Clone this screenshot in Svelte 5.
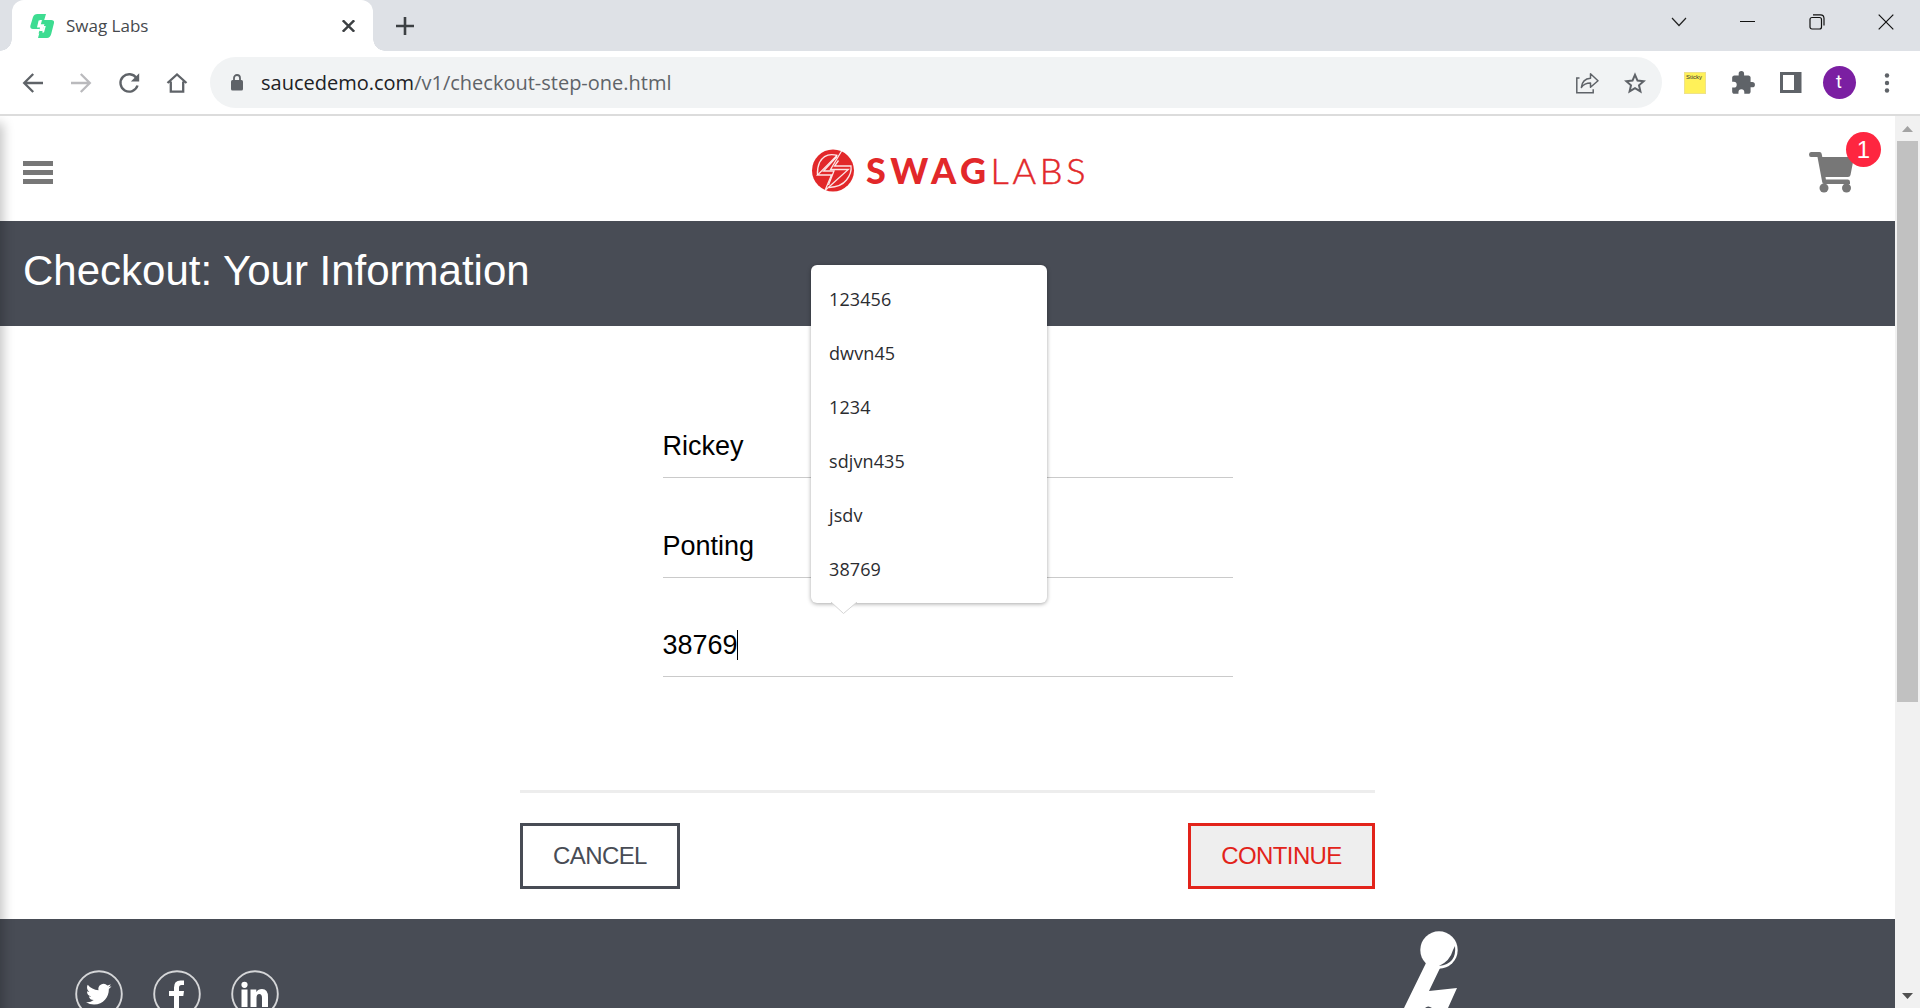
<script>
  const suggestions = ['123456', 'dwvn45', '1234', 'sdjvn435', 'jsdv', '38769'];
  const fields = [
    { value: 'Rickey', active: false },
    { value: 'Ponting', active: false },
    { value: '38769', active: true }
  ];
</script>

<div class="window">
  <div class="tabstrip">
    <div class="tab">
      <svg class="favicon" width="24" height="24" viewBox="0 0 24 24">
        <path fill="#3ddc91" d="M7.5 0H16L14.2 6H9.8L8 13h5.5L12 19.500H8.500L10 15H3Q0 15 .3 12L3 3Q4 0 7.500 0z" />
        <path fill="#3ddc91" d="M12 6h9.500Q24.500 6 24 9l-2.800 11Q20 24 17 24H8l1.500-5.500H14L15.800 12H10z" />
        <path fill="#fff" d="M8.600 6.500h4l-.8 3.500h2.600l-1.600 7H9.200l.9-3.500H7z" />
        <path fill="#3ddc91" d="M12 6.300h3l-1 4h-3.200z" />
      </svg>
      <span class="tab-title">Swag Labs</span>
      <svg class="tab-close" width="13" height="12" viewBox="0 0 13 12"><path d="M.8.300l11.400 11.400M12.200.300L.8 11.700" fill="none" stroke="#3c4043" stroke-width="2.400" /></svg>
    </div>
    <svg class="new-tab" width="18" height="18" viewBox="0 0 18 18"><path d="M9 0v18M0 9h18" stroke="#3c4043" stroke-width="2.600" /></svg>
    <div class="window-controls">
      <span><svg width="16" height="10" viewBox="0 0 16 10"><path d="M1 1l7 7.500L15 1" fill="none" stroke="#222" stroke-width="1.200" /></svg></span>
      <span><svg width="15" height="2" viewBox="0 0 15 2"><path d="M0 .5h15" stroke="#111" stroke-width="1" /></svg></span>
      <span><svg width="16" height="16" viewBox="0 0 16 16"><g fill="none" stroke="#111" stroke-width="1.200"><rect x="1" y="3.500" width="11.500" height="11.500" rx="2" /><path d="M4 .8h7.500Q15 .8 15 4.500v7" /></g></svg></span>
      <span><svg width="16" height="16" viewBox="0 0 16 16"><path d="M.7.700l14.600 14.600M15.300.700L.7 15.300" stroke="#111" stroke-width="1.200" /></svg></span>
    </div>
  </div>

  <div class="toolbar">
    <span class="cell"><svg width="22" height="22" viewBox="0 0 22 22"><path d="M21 11H2.500M11.200 2L2.200 11l9 9" fill="none" stroke="#5f6368" stroke-width="2.300" /></svg></span>
    <span class="cell"><svg width="22" height="22" viewBox="0 0 22 22"><path d="M1 11h18.500M10.800 2l9 9-9 9" fill="none" stroke="#bababd" stroke-width="2.300" /></svg></span>
    <span class="cell"><svg width="22" height="22" viewBox="0 0 22 22"><path d="M18.500 6.200A8.700 8.700 0 1 0 19.500 13.500" fill="none" stroke="#5f6368" stroke-width="2.400" /><path d="M21.200 1.200v8.300h-8.300z" fill="#5f6368" /></svg></span>
    <span class="cell"><svg width="22" height="22" viewBox="0 0 22 22"><path d="M1.500 11L11 2.500 20.500 11M4.800 9.500V19.700h12.400V9.500" fill="none" stroke="#5f6368" stroke-width="2.300" /></svg></span>
    <div class="omnibox">
      <svg class="lock" width="12" height="17" viewBox="0 0 12 17"><rect y="6" width="12" height="10.500" rx="1.500" fill="#5f6368" /><path d="M3 7V4a3 3 0 0 1 6 0v3" fill="none" stroke="#5f6368" stroke-width="1.800" /></svg>
      <span class="url">saucedemo.com<i>/v1/checkout-step-one.html</i></span>
      <span class="cell"><svg width="24" height="22" viewBox="0 0 24 22"><g fill="none" stroke="#5f6368" stroke-width="1.500"><path d="M4.500 6H1.800v14.800h16.400v-3.600" /><path stroke-linejoin="round" d="M6.300 15.500C7 9.500 10.500 6.500 15.500 6.200V1.800L23 8.700l-7.500 6.600v-4.200c-4 0-7 1.200-9.200 4.400z" /></g></svg></span>
      <span class="cell"><svg width="22" height="22" viewBox="0 0 22 22"><path d="M11 2.800l2.500 5.800 6.200.6-4.700 4.100 1.400 6.100-5.400-3.200-5.400 3.200L7 13.300 2.300 9.200l6.200-.6z" fill="none" stroke="#5f6368" stroke-width="2" /></svg></span>
    </div>
    <span class="cell"><span class="sticky">Sticky</span></span>
    <span class="cell"><svg width="26" height="26" viewBox="0 0 24 24"><path fill="#5f6368" d="M20.500 11H19V7c0-1.100-.9-2-2-2h-4V3.500a2.500 2.500 0 0 0-5 0V5H4c-1.100 0-2 .9-2 2v3.800h1.500a2.700 2.700 0 0 1 0 5.400H2V20c0 1.100.9 2 2 2h3.800v-1.500a2.700 2.700 0 0 1 5.400 0V22H17c1.100 0 2-.9 2-2v-4h1.500a2.500 2.500 0 0 0 0-5z" /></svg></span>
    <span class="cell"><svg width="22" height="21" viewBox="0 0 22 21"><path fill="#5f6368" fill-rule="evenodd" d="M0 0h21.500v21H0zM3 3v15h11V3z" /></svg></span>
    <span class="cell"><span class="avatar">t</span></span>
    <span class="cell"><svg width="6" height="20" viewBox="0 0 6 20"><g fill="#5f6368"><circle cx="3" cy="2.500" r="2.200" /><circle cx="3" cy="10" r="2.200" /><circle cx="3" cy="17.500" r="2.200" /></g></svg></span>
  </div>

  <div class="viewport">
    <main>
      <header>
        <div class="burger"><b></b><b></b><b></b></div>
        <svg class="logo" width="276" height="48" viewBox="0 0 276 48">
          <circle cx="22" cy="24.500" r="21" fill="#e2282a" />
          <g fill="none" stroke="#fff" stroke-opacity=".88" stroke-width="1.300">
            <path d="M31.500 3.500L19.500 23.500h17.800L14 44.500l6.500-15.500H6.500L26 9.500" />
            <path d="M26.500 9.500Q14 6 8.500 16.500 6 22 6.500 29M26 10.500L12.500 25H23L17.500 39" />
            <path d="M27.500 14.500L23.500 20H40Q41 27 35.500 34T18 41.500" />
          </g>
          <text class="swag" x="55" y="37.500" textLength="120" lengthAdjust="spacing">SWAG</text>
          <text class="labs" x="179.500" y="37.500" textLength="95" lengthAdjust="spacing">LABS</text>
        </svg>
        <div class="cart">
          <svg width="46" height="42" viewBox="0 0 46 42">
            <path fill="#777" d="M2 0h8.500q2 0 2.200 2l.6 3H45l-3.500 18q-.4 2-2.500 2H16.500l.4 2.500H39q2 0 2 2.500v2H15q-1.500 0-1.800-2L8.500 5H2Q0 5 0 2.500T2 0z" />
            <circle cx="15" cy="36" r="4.500" fill="#777" /><circle cx="37.500" cy="36" r="4.500" fill="#777" />
          </svg>
          <span class="badge">1</span>
        </div>
      </header>
      <div class="subheader">Checkout: Your Information</div>

      <form>
        <div class="fields">
          {#each fields as field}
            <div class="field"><span class:active={field.active}>{field.value}</span></div>
          {/each}
        </div>
        <div class="actions">
          <span class="btn cancel">CANCEL</span>
          <span class="btn continue">CONTINUE</span>
        </div>
      </form>

      <footer>
        <div class="social">
          <svg width="48" height="48" viewBox="0 0 48 48">
            <circle cx="24" cy="24" r="22.800" fill="none" stroke="#d5d6d8" stroke-width="1.900" />
            <path fill="#fff" transform="translate(11 11.500) scale(1.060)" d="M23.950 4.570a10 10 0 0 1-2.820.77 4.960 4.960 0 0 0 2.160-2.720c-.95.55-2 .95-3.130 1.180a4.920 4.920 0 0 0-8.380 4.480C7.690 8.090 4.070 6.130 1.640 3.160a4.820 4.820 0 0 0-.67 2.480c0 1.710.87 3.210 2.190 4.100a4.900 4.900 0 0 1-2.230-.62v.06a4.920 4.920 0 0 0 3.950 4.830 5 5 0 0 1-2.210.08 4.940 4.940 0 0 0 4.600 3.420A9.870 9.870 0 0 1 0 19.540a14 14 0 0 0 7.550 2.210c9.050 0 14-7.500 14-13.980 0-.21 0-.42-.02-.63a9.940 9.940 0 0 0 2.460-2.550z" />
          </svg>
          <svg width="48" height="48" viewBox="0 0 48 48">
            <circle cx="24" cy="24" r="22.800" fill="none" stroke="#d5d6d8" stroke-width="1.900" />
            <path fill="#fff" d="M21 38V26h-5v-5h5v-3.500q0-7 6.500-7H31V15h-2.500q-2.500 0-2.500 2.500V21h5l-.7 5H26v12z" />
          </svg>
          <svg width="48" height="48" viewBox="0 0 48 48">
            <circle cx="24" cy="24" r="22.800" fill="none" stroke="#d5d6d8" stroke-width="1.900" />
            <path fill="#fff" d="M10.500 19.500h6V37h-6zM19.500 19.500h5.800V22q1.800-3 5.700-3 6 0 6 8v10h-6v-9q0-4-2.700-4-2.800 0-2.800 4v9h-6z" /><circle cx="13.500" cy="14.800" r="3.100" fill="#fff" />
          </svg>
        </div>
        <svg class="robot" width="60" height="77" viewBox="0 0 60 77">
          <circle cx="35" cy="19" r="18.700" fill="#fff" />
          <path fill="#fff" d="M22 32L0 77h44l9-20-28 3 12-25z" />
          <path d="M51 15q2 18-16 20 11-5 14-16z" fill="#484c55" />
          <path d="M21 77q3-3 7 0z" fill="#484c55" />
        </svg>
      </footer>

      <div class="popup">
        {#each suggestions as item}<div>{item}</div>{/each}
        <svg class="pointer" width="26" height="12" viewBox="0 0 26 12"><path d="M0 0l12.500 11.500L26 0" fill="#fff" stroke="#d4d4d4" /></svg>
      </div>
      <div class="edge-shadow"></div>
    </main>
    <div class="scrollbar">
      <svg width="11" height="6" viewBox="0 0 11 6"><path d="M0 6l5.500-6L11 6z" fill="#a3a3a3" /></svg>
      <div class="thumb"></div>
      <svg class="down" width="11" height="6" viewBox="0 0 11 6"><path d="M0 0l5.500 6L11 0z" fill="#505050" /></svg>
    </div>
  </div>
</div>

<style>
  :global(body) { margin: 0; overflow: hidden; }
  .window { width: 1920px; height: 1008px; display: flex; flex-direction: column; background: #fff; overflow: hidden; font-family: "Liberation Sans", Arial, sans-serif; }
  svg { display: block; flex: none; }

  .tabstrip { height: 51px; flex: none; display: flex; align-items: center; background: #dee1e6; }
  .tab { position: relative; box-sizing: border-box; width: 361px; height: 51px; margin-left: 12px; padding: 0 18.500px 0 18px; display: flex; align-items: center; background: #fff; border-radius: 12px 12px 0 0; }
  .tab::before, .tab::after { content: ""; position: absolute; bottom: 0; width: 12px; height: 12px; }
  .tab::before { left: -12px; background: radial-gradient(circle at 0 0, transparent 11.500px, #fff 12px); }
  .tab::after { right: -12px; background: radial-gradient(circle at 100% 0, transparent 11.500px, #fff 12px); }
  .tab-title { margin-left: 12px; font: 17px "Open Sans", sans-serif; color: #45494d; }
  .tab-close { margin-left: auto; }
  .new-tab { margin-left: 23px; }
  .window-controls { margin: 0 0 8px auto; display: flex; }
  .window-controls span { width: 69px; display: grid; place-items: center; }

  .toolbar { height: 63px; flex: none; display: flex; align-items: center; padding: 0 9px; border-bottom: 2px solid #dcdcdc; }
  .cell { width: 48px; flex: none; display: grid; place-items: center; }
  .omnibox { flex: 1; height: 51px; margin: 0 9px; padding: 0 3px 0 21px; box-sizing: border-box; display: flex; align-items: center; border-radius: 26px; background: #f1f3f4; }
  .url { flex: 1; margin-left: 18px; font: 20px "Open Sans", sans-serif; color: #202124; white-space: nowrap; }
  .url i { font-style: normal; color: #5f6368; }
  .sticky { width: 22px; height: 22px; box-sizing: border-box; padding-left: 1px; background: #fff159; border: 1px solid #eee28a; font: 6px/8px "Liberation Sans", sans-serif; color: #333; }
  .avatar { width: 33px; height: 33px; border-radius: 50%; background: #7b1fa2; color: #fff; font: 18px/32px Roboto, sans-serif; text-align: center; }

  .viewport { flex: 1; min-height: 0; display: flex; }
  main { position: relative; width: 1895px; overflow: hidden; }
  header { height: 105px; box-sizing: border-box; padding: 0 14px 0 23px; display: grid; grid-template-columns: 788px 276px 1fr; align-items: center; }
  .burger { width: 30px; display: grid; gap: 4px; margin-top: 8px; }
  .burger b { height: 5px; background: #777; }
  .logo { margin-top: 2px; }
  .swag { font: 900 36px Lato, sans-serif; fill: #e2282a; }
  .labs { font: 300 36px Lato, sans-serif; fill: #e2282a; stroke: #e2282a; stroke-width: .5px; }
  .cart { position: relative; justify-self: end; width: 72px; height: 62px; padding-top: 20px; margin-bottom: 11px; box-sizing: border-box; }
  .badge { position: absolute; right: 0; top: 0; width: 35px; height: 35px; border-radius: 50%; background: #fe2640; color: #fff; font-size: 24px; line-height: 35px; text-align: center; }
  .subheader { height: 105px; box-sizing: border-box; padding-left: 23px; background: #484c55; color: #fff; font-size: 42px; line-height: 100px; }

  form { width: 855px; height: 593px; margin: 0 auto; display: flex; flex-direction: column; }
  .fields { flex: 1; width: 570px; margin: 0 auto; padding-top: 92px; }
  .field { height: 59px; margin-bottom: 40px; border-bottom: 1px solid #cacaca; font-size: 27px; line-height: 56px; color: #000; }
  .field:last-child { margin-bottom: 0; height: 58px; line-height: 54px; }
  .active { display: inline-block; height: 30px; line-height: 30px; margin-right: -1px; border-right: 1px solid #000; width: 74px; }
  .actions { height: 129px; box-sizing: border-box; padding-top: 30px; border-top: 3px solid #ededed; display: flex; justify-content: space-between; }
  .btn { height: 66px; box-sizing: border-box; border: 3px solid #484c55; color: #484c55; font-size: 24px; line-height: 60px; text-align: center; letter-spacing: -.6px; }
  .cancel { width: 160px; }
  .continue { width: 187px; border-color: #e2231a; color: #e2231a; background: #eee; }

  footer { height: 89px; background: #484c55; display: flex; justify-content: space-between; padding: 0 431px 0 75px; overflow: hidden; }
  .social { display: flex; gap: 30px; padding-top: 51px; }
  .robot { margin-top: 12px; }

  .popup { position: absolute; left: 811px; top: 149px; width: 236px; height: 338px; box-sizing: border-box; padding-top: 7px; border-radius: 6px; background: #fff; box-shadow: 0 1px 4px rgba(0, 0, 0, .35); font: 18px/54px "Open Sans", sans-serif; color: #2b2c30; }
  .popup div { height: 54px; padding-left: 18px; letter-spacing: .1px; }
  .pointer { position: absolute; left: 20px; top: 337px; }
  .edge-shadow { position: absolute; left: -10px; top: 10px; width: 10px; height: 900px; box-shadow: 0 0 12px 3px rgba(0, 0, 0, .24); }

  .scrollbar { width: 25px; background: #f1f1f1; display: flex; flex-direction: column; align-items: center; padding: 10px 0 9px; box-sizing: border-box; }
  .thumb { width: 21px; height: 561px; margin-top: 9px; background: #c1c1c1; }
  .down { margin-top: auto; }
</style>
